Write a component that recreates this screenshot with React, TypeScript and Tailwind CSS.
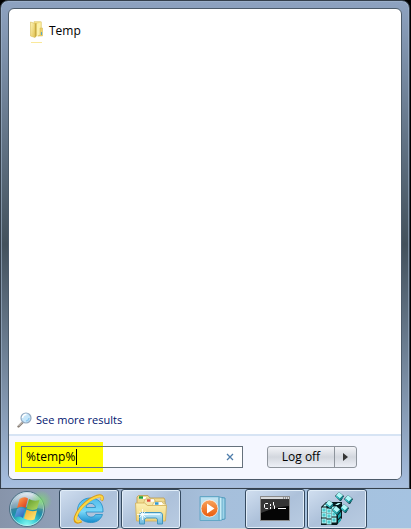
import { useState } from 'react';

function FolderIcon() {
  return (
    <svg width="16" height="24" viewBox="0 0 16 24" aria-hidden="true">
      <defs>
        <linearGradient id="folderFront" x1="0" y1="0" x2="1" y2="1">
          <stop offset="0" stopColor="#fdf4b8" />
          <stop offset="1" stopColor="#e3c352" />
        </linearGradient>
      </defs>
      <path d="M5 .5h6.500q1 0 1 1v13H5z" fill="#f3df86" stroke="#dfca7a" strokeWidth=".5" />
      <path d="M7.500 3l4-1.500V14l-4 2z" fill="#fbf0a8" />
      <path d="M1.500 1L6 2.500v14L1.500 15z" fill="url(#folderFront)" stroke="#d8bd57" strokeWidth=".6" />
      <path d="M6 2.500l1.500-.5V15L6 16.500z" fill="#c9ab42" />
      <path d="M11 7h2.500v8H9l2-1z" fill="#ecd06a" stroke="#d6b64c" strokeWidth=".5" />
      <path d="M12.500 11v3" stroke="#55a9c4" />
      <path d="M2 21.500h11" stroke="#fae99b" />
    </svg>
  );
}

function MagnifierIcon() {
  return (
    <svg width="16" height="16" viewBox="0 0 16 16" aria-hidden="true">
      <path d="M1.500 14.500L6 10" stroke="#8a8078" strokeWidth="2.400" strokeLinecap="round" />
      <path d="M1.500 14L6 9.500" stroke="#e0dbd5" strokeWidth=".9" />
      <circle cx="9" cy="6" r="5" fill="#c6e6fa" stroke="#93a9c0" strokeWidth="1.200" />
      <path d="M5.500 6a3.500 3.500 0 0 1 4-3.500" fill="none" stroke="#fff" strokeWidth="1.500" />
      <path d="M12 6a3.500 3.500 0 0 1-3 3" fill="none" stroke="#8ec9ef" strokeWidth="1.500" />
    </svg>
  );
}

function StartOrb() {
  return (
    <svg width="52" height="40" viewBox="0 0 52 40" aria-hidden="true">
      <defs>
        <radialGradient id="orbBase" cx=".5" cy=".98" r=".95">
          <stop offset="0" stopColor="#8dfbf3" />
          <stop offset=".28" stopColor="#3fd0d6" />
          <stop offset=".52" stopColor="#1c8fa9" />
          <stop offset=".75" stopColor="#4f8098" />
          <stop offset="1" stopColor="#a9bdce" />
        </radialGradient>
        <radialGradient id="orbGlow">
          <stop offset="0" stopColor="#7be06a" stopOpacity=".75" />
          <stop offset="1" stopColor="#7be06a" stopOpacity="0" />
        </radialGradient>
        <linearGradient id="orbShine" x1="0" y1="0" x2="0" y2="1">
          <stop offset="0" stopColor="#eef3f7" stopOpacity=".85" />
          <stop offset="1" stopColor="#a9c0cf" stopOpacity=".45" />
        </linearGradient>
        <linearGradient id="flagRed" x1="0" y1="0" x2="1" y2="1">
          <stop offset="0" stopColor="#f9b05a" />
          <stop offset=".5" stopColor="#ef6c33" />
          <stop offset="1" stopColor="#cf3424" />
        </linearGradient>
        <linearGradient id="flagGreen" x1="0" y1="0" x2="1" y2="1">
          <stop offset="0" stopColor="#5f9a2c" />
          <stop offset="1" stopColor="#b3dc63" />
        </linearGradient>
        <linearGradient id="flagBlue" x1="0" y1="0" x2="1" y2="1">
          <stop offset="0" stopColor="#6db2ea" />
          <stop offset="1" stopColor="#235fb4" />
        </linearGradient>
        <linearGradient id="flagYellow" x1="0" y1="0" x2="1" y2="1">
          <stop offset="0" stopColor="#f0a829" />
          <stop offset="1" stopColor="#fff180" />
        </linearGradient>
      </defs>
      <circle cx="27" cy="20" r="17.500" fill="url(#orbBase)" stroke="#4d6f84" />
      <circle cx="27" cy="20" r="16.500" fill="none" stroke="#d3ecf1" strokeOpacity=".7" />
      <path d="M11 20a16 16 0 0 1 32 0q-16-4-32 0z" fill="url(#orbShine)" />
      <circle cx="41" cy="12" r="11" fill="url(#orbGlow)" />
      <path d="M19.500 10q4.500-3 8.500-.5l-2.500 9.500q-4-2.500-8.500 0z" fill="url(#flagRed)" />
      <path d="M29 10q5 3 10.500 1l-2.500 9q-5.500 2-10.500-.5z" fill="url(#flagGreen)" />
      <path d="M17 20q4-2.500 8.500 0L23 29q-4-2.500-8.500-.5z" fill="url(#flagBlue)" />
      <path d="M26.500 20.500q5 3 10.500 1l-2.500 9q-5 2-10.500-1z" fill="url(#flagYellow)" />
    </svg>
  );
}

function ExplorerEIcon() {
  return (
    <svg width="32" height="32" viewBox="0 0 32 32" aria-hidden="true">
      <defs>
        <linearGradient id="eBlue" x1="0" y1="0" x2="0" y2="1">
          <stop offset="0" stopColor="#4fb9ea" />
          <stop offset=".55" stopColor="#7ad8f8" />
          <stop offset="1" stopColor="#168cce" />
        </linearGradient>
      </defs>
      <path
        d="M30 19H13c.3 6 8 6.500 9.500 2.500h7c-2 6-7 8.500-13 8C9 29 4.500 24 4.500 17.500 4.500 10 10 5 17.500 5S30.500 10 30 19zM13 14.500h9.500c-.5-5.500-9-5.500-9.500 0z"
        fill="url(#eBlue)"
        stroke="#218bc4"
        strokeWidth=".8"
      />
      <path
        d="M28.500 7.500c2-3.500 0-6-5-4C15 6.500 5 16 2.500 24c-1.500 5 1.500 6.500 6 4"
        fill="none"
        stroke="#d99a18"
        strokeWidth="3"
      />
      <path
        d="M28.500 7c1.500-3 0-5-5-3C15 7 5 16.500 3 24c-1 4 1.500 5.500 5 3.500"
        fill="none"
        stroke="#fbd744"
        strokeWidth="2"
      />
    </svg>
  );
}

function LibrariesIcon() {
  return (
    <svg width="34" height="32" viewBox="0 0 34 32" aria-hidden="true">
      <defs>
        <linearGradient id="libFolder" x1="0" y1="0" x2="0" y2="1">
          <stop offset="0" stopColor="#fcf0b4" />
          <stop offset="1" stopColor="#efd47a" />
        </linearGradient>
        <linearGradient id="libStand" x1="0" y1="0" x2="0" y2="1">
          <stop offset="0" stopColor="#c9ecfa" />
          <stop offset="1" stopColor="#67b6dc" />
        </linearGradient>
      </defs>
      <path d="M3 10V4l1.500-1.500H14L16 5h14l1 2v20H3z" fill="#f0dc92" stroke="#bd9b4b" strokeWidth=".8" />
      <path d="M5 4h7v2H5z" fill="#fff" />
      <path d="M5 4.500h4" stroke="#21a341" strokeWidth="2.500" />
      <path d="M9 12l2-6h9l2 3h9v4H9z" fill="#f6e7aa" stroke="#c5a75d" strokeWidth=".6" />
      <path d="M13 7.500h7" stroke="#fff" strokeWidth="2.500" />
      <path d="M13 7.500h3.500" stroke="#df4832" strokeWidth="2.500" />
      <path d="M18 13l2-4h8l2 2h2v4H18z" fill="#fff5ce" stroke="#c5a75d" strokeWidth=".6" />
      <path d="M21 10.500h7" stroke="#fff" strokeWidth="2.500" />
      <path d="M21 10.500h3.500" stroke="#3098d0" strokeWidth="2.500" />
      <path d="M1.500 10h9l3 2.500h19L31.500 28h-29z" fill="url(#libFolder)" stroke="#d1ae56" strokeWidth=".8" />
      <path
        d="M5.500 31v-9q0-2.500 2.500-2.500h18q2.500 0 2.500 2.500v9h-5v-4q0-2-2-2h-9q-2 0-2 2v4z"
        fill="url(#libStand)"
        stroke="#4496bd"
      />
      <path d="M8 21.500h18" stroke="#e9f9ff" />
      <path d="M8.500 16v11M3 21.500h11M5.500 18.500l6 6M11.500 18.500l-6 6" stroke="#fff" strokeWidth=".8" />
    </svg>
  );
}

function MediaPlayerIcon() {
  return (
    <svg width="28" height="26" viewBox="0 0 28 26" aria-hidden="true">
      <defs>
        <linearGradient id="playOrange" x1="0" y1="0" x2="0" y2="1">
          <stop offset="0" stopColor="#f8a45d" />
          <stop offset="1" stopColor="#e95a0a" />
        </linearGradient>
      </defs>
      <path d="M18 1l8 1v21l-8 1.500z" fill="#9fd4e9" stroke="#4b99bb" />
      <path d="M20 1l3 .5V24l-3 .5z" fill="#c8edf7" stroke="#4b99bb" strokeWidth=".7" />
      <path d="M1 .5h19v24H1z" fill="#94c9e1" stroke="#64a7c6" />
      <path d="M2 1.500h17v7L2 14z" fill="#bfe3f1" />
      <circle cx="10.500" cy="12.500" r="8.500" fill="url(#playOrange)" stroke="#fff" strokeWidth=".7" />
      <path d="M8 7.500l7.500 5-7.500 5z" fill="#fff" />
    </svg>
  );
}

function ConsoleIcon() {
  return (
    <svg width="30" height="26" viewBox="0 0 30 26" aria-hidden="true">
      <path d="M.5.5h29v24H.5z" fill="#050505" stroke="#8a8a8a" />
      <path d="M1 1h28v2H1z" fill="#d7d9db" />
      <path d="M23 2h1M25 2h1M27 2h1" stroke="#555" />
      <path d="M1 3h28v7Q15 11 1 17z" fill="#353535" />
      <path d="M8 7.500H5.500l-1 1v3l1 1H8M10.500 8v2M10.500 11v2M13.500 6v3l1 1v3" fill="none" stroke="#fff" />
      <path d="M18 12.500h8" stroke="#fff" />
    </svg>
  );
}

const frontCubes = [
  [2, 16], [7, 17], [12, 15],
  [2, 21], [7, 22], [12, 20],
  [2, 27], [7, 28], [12, 26],
];

const looseCubes = [
  [20, 4], [29, 7], [25, 16], [17, 18], [10, 12],
];

function RegistryIcon() {
  return (
    <svg width="34" height="34" viewBox="0 0 34 34" aria-hidden="true">
      <path d="M1 15l5-5h16v16l-5 7H1z" fill="#071b1e" />
      {frontCubes.map(([x, y]) => (
        <rect key={`${x}-${y}`} x={x} y={y} width="4" height="4" fill="#4cc9cc" stroke="#c4ffff" strokeWidth=".9" />
      ))}
      <path d="M3 14.500l3-3.500h3l-3 3.500zM15 13l3-2h3l-3 2z" fill="#b9fbfa" />
      <path d="M18 23l3-3v4l-3 3zM18 28.500l3-3v3l-3 3z" fill="#1ba1a7" />
      {looseCubes.map(([x, y]) => (
        <g key={`${x}-${y}`} transform={`translate(${x} ${y})`}>
          <path d="M-1-4l5 4-3 5h-1l-5-5z" fill="#062e32" />
          <path d="M-1-4l4 3.500-3 3-4-3z" fill="#b0f8f8" />
          <path d="M-4-.5l4 3V4l-4-3z" fill="#35c9ce" />
          <path d="M0 2.500l3-3v2L0 5z" fill="#11858c" />
        </g>
      ))}
    </svg>
  );
}

const taskButton =
  'flex h-10 w-15 items-center justify-center rounded-[3px] border border-[#354a60] bg-linear-to-br from-[#d1dff0] via-[#adc1da] to-[#b9cce2] shadow-[inset_0_0_0_1px_#e1edf8]';

export default function App() {
  const [query, setQuery] = useState('%temp%');

  return (
    <div className="flex min-h-screen flex-col bg-black font-['Open_Sans','Noto_Sans',sans-serif] text-xs text-black">
      <main className="mr-px flex flex-1 flex-col rounded-t-lg border border-[#35404c] bg-linear-to-b from-[#8ea3c1] via-[#43515c] to-[#a7bfe0] p-[7px] pb-2 shadow-[inset_0_0_0_1px_#a4b8cf99]">
        <div className="flex flex-1 flex-col overflow-hidden rounded-md border border-[#4c5b6a] bg-white">
          <section className="flex flex-1 flex-col px-2 pt-3 pb-1.5">
            <a href="#temp" className="ml-3 flex items-start">
              <FolderIcon />
              <span className="ml-1 leading-5">Temp</span>
            </a>
            <a href="#results" className="mt-auto flex items-center gap-[3px] text-[11px] leading-4 text-[#00146f]">
              <MagnifierIcon />
              See more results
            </a>
          </section>

          <footer className="flex h-[45px] items-center border-t-2 border-[#d7e4f4] bg-[#f5f7ff] pb-0.5 pl-1.5">
            <div className="flex w-[228px] bg-linear-to-r from-[#ffff00] from-[88px] to-transparent to-[88px] py-1 pl-1.5">
              <div className="flex h-[22px] min-w-0 flex-1 items-center border border-[#65717c] bg-linear-to-r from-[#ffff00] from-[81px] to-white to-[81px] pl-1">
                <div className="relative flex min-w-0 flex-1 items-center">
                  <input
                    aria-label="Search programs and files"
                    value={query}
                    onChange={(e) => setQuery(e.target.value)}
                    className="w-full bg-transparent outline-none"
                  />
                  {/* text caret */}
                  <span className="pointer-events-none absolute left-[50px] h-4 w-px bg-black" />
                </div>
                <button aria-label="Clear search" onClick={() => setQuery('')} className="flex w-6 justify-center">
                  <svg width="8" height="8" viewBox="0 0 8 8" aria-hidden="true">
                    <path d="M1 1l6 6M7 1L1 7" stroke="#4f7dab" strokeWidth="1.300" />
                  </svg>
                </button>
              </div>
            </div>
            <div className="ml-6 flex h-[22px] rounded-[3px] border border-[#8e949c] bg-linear-to-b from-[#f3f4f8] via-[#d3d7de] via-50% to-[#edf0f7]">
              <button className="w-[67px] border-r border-[#8e949c]">Log off</button>
              <button aria-label="More shut down options" className="flex w-[21px] items-center justify-center">
                <svg width="5" height="8" viewBox="0 0 5 8" aria-hidden="true">
                  <path d="M0 0l5 4-5 4z" fill="#353535" />
                </svg>
              </button>
            </div>
          </footer>
        </div>
      </main>

      <nav className="flex h-10 items-center border-b border-[#d8d8d8] bg-linear-to-r from-[#8794aa] via-[#a6bfdb] via-50% to-[#a5c3e1]">
        <button aria-label="Start" className="w-[59px]"><StartOrb /></button>
        <button aria-label="Internet Explorer" className={taskButton}><ExplorerEIcon /></button>
        <button aria-label="Windows Explorer" className={`${taskButton} ml-0.5`}><LibrariesIcon /></button>
        <button aria-label="Windows Media Player" className="flex w-16 justify-center"><MediaPlayerIcon /></button>
        <button aria-label="Command Prompt" className={taskButton}><ConsoleIcon /></button>
        <button aria-label="Registry Editor" className={`${taskButton} ml-0.5`}><RegistryIcon /></button>
      </nav>
    </div>
  );
}
